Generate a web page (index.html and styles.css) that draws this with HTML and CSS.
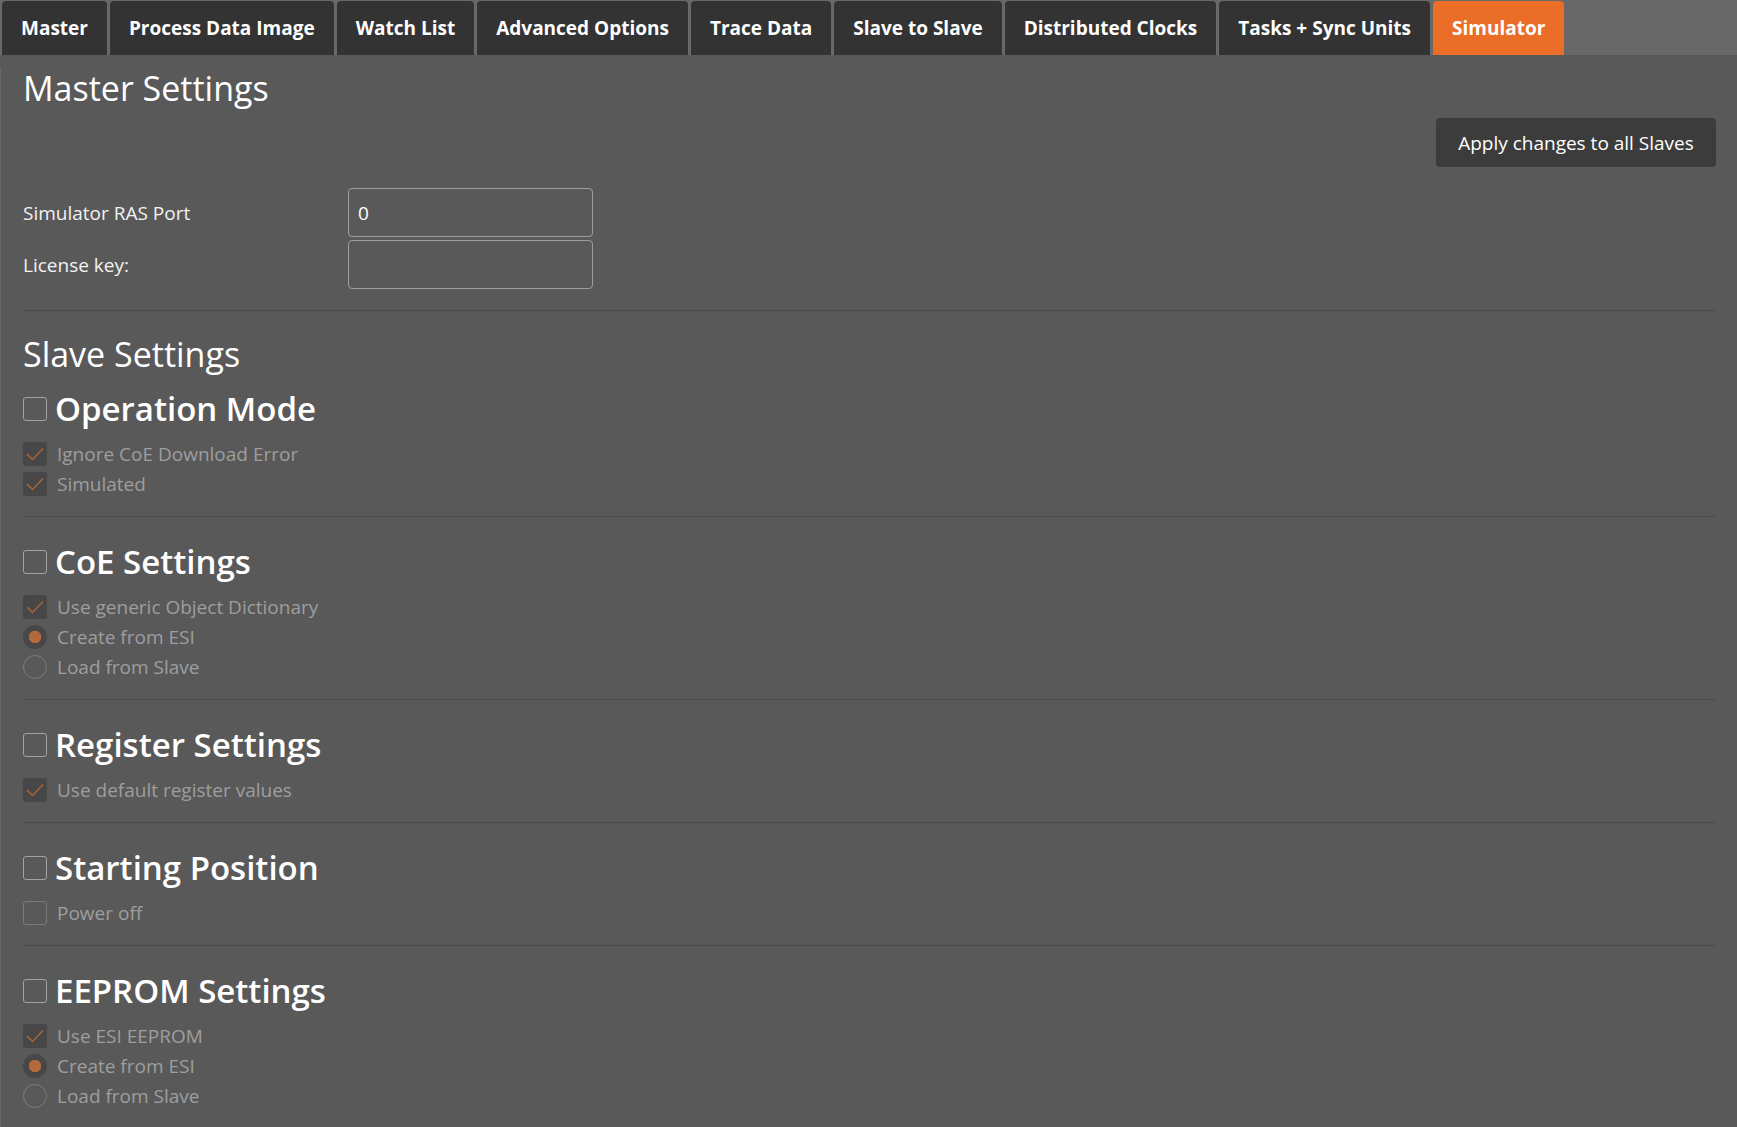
FILE: index.html
```html
<!DOCTYPE html>
<html lang="en">
<head>
    <meta charset="UTF-8">
    <meta name="viewport" content="width=device-width, initial-scale=1.0">
    <title>Simulator</title>
    <link rel="stylesheet" href="styles.css">
</head>
<body>

<!-- Tab strip -->
<nav class="tabs">
    <div class="tab">Master</div>
    <div class="tab">Process Data Image</div>
    <div class="tab">Watch List</div>
    <div class="tab">Advanced Options</div>
    <div class="tab">Trace Data</div>
    <div class="tab">Slave to Slave</div>
    <div class="tab">Distributed Clocks</div>
    <div class="tab">Tasks + Sync Units</div>
    <div class="tab active">Simulator</div>
</nav>

<main class="content">

    <section class="master">
        <h1 class="title">Master Settings</h1>
        <div class="toolbar">
            <button class="apply">Apply changes to all Slaves</button>
        </div>
        <div class="form">
            <label class="form-label">Simulator RAS Port</label>
            <input class="form-input" type="text" value="0">
            <label class="form-label">License key:</label>
            <input class="form-input" type="text">
        </div>
    </section>

    <h1 class="title slave-title">Slave Settings</h1>

    <section class="group first">
        <div class="group-head"><span class="box"></span><h2>Operation Mode</h2></div>
        <div class="items">
            <div class="item"><span class="box checked"><svg viewBox="0 0 24 24"><path d="M4 12 L9.5 17.5 L20 6.5"/></svg></span>Ignore CoE Download Error</div>
            <div class="item"><span class="box checked"><svg viewBox="0 0 24 24"><path d="M4 12 L9.5 17.5 L20 6.5"/></svg></span>Simulated</div>
        </div>
    </section>

    <section class="group">
        <div class="group-head"><span class="box"></span><h2>CoE Settings</h2></div>
        <div class="items">
            <div class="item"><span class="box checked"><svg viewBox="0 0 24 24"><path d="M4 12 L9.5 17.5 L20 6.5"/></svg></span>Use generic Object Dictionary</div>
            <div class="item"><span class="radio on"></span>Create from ESI</div>
            <div class="item"><span class="radio"></span>Load from Slave</div>
        </div>
    </section>

    <section class="group">
        <div class="group-head"><span class="box"></span><h2>Register Settings</h2></div>
        <div class="items">
            <div class="item"><span class="box checked"><svg viewBox="0 0 24 24"><path d="M4 12 L9.5 17.5 L20 6.5"/></svg></span>Use default register values</div>
        </div>
    </section>

    <section class="group">
        <div class="group-head"><span class="box"></span><h2>Starting Position</h2></div>
        <div class="items">
            <div class="item"><span class="box off"></span>Power off</div>
        </div>
    </section>

    <section class="group last">
        <div class="group-head"><span class="box"></span><h2>EEPROM Settings</h2></div>
        <div class="items">
            <div class="item"><span class="box checked"><svg viewBox="0 0 24 24"><path d="M4 12 L9.5 17.5 L20 6.5"/></svg></span>Use ESI EEPROM</div>
            <div class="item"><span class="radio on"></span>Create from ESI</div>
            <div class="item"><span class="radio"></span>Load from Slave</div>
        </div>
    </section>

</main>

</body>
</html>
```

FILE: styles.css
```css
body {
    margin: 0;
    background-color: #595959;
    font-family: "Open Sans", "Noto Sans", sans-serif;
    color: #fff;
}

/* tab strip */
.tabs {
    display: flex;
    gap: 3px;
    height: 55px;
    padding: 1px 0 0 2px;
    box-sizing: border-box;
    background-color: #686868;
}

.tab {
    display: flex;
    align-items: center;
    padding: 0 19px;
    background-color: #333;
    border-radius: 4px 4px 0 0;
    font-size: 19px;
    font-weight: 700;
    white-space: nowrap;
}

.tab.active {
    background-color: #ea6e28;
}

/* page body */
.content {
    padding: 0 21px 0 22px;
    border-left: 1px solid #666;
    min-height: 1072px;
}

.title {
    margin: 12px 0 0;
    font-size: 34px;
    line-height: 42px;
    font-weight: 500;
}

.slave-title {
    margin-top: 22px;
}

.master {
    padding-bottom: 21px;
    border-bottom: 1px solid #4b4b4b;
}

.toolbar {
    display: flex;
    justify-content: flex-end;
    margin-top: 9px;
}

.apply {
    width: 280px;
    height: 49px;
    background-color: #3c3c3c;
    color: #fff;
    border: none;
    border-radius: 4px;
    font-family: inherit;
    font-size: 19px;
    cursor: pointer;
}

.form {
    display: grid;
    grid-template-columns: 325px 245px;
    row-gap: 3px;
    align-items: center;
    margin-top: 21px;
}

.form-label {
    font-size: 19px;
    color: #f2f2f2;
}

.form-input {
    height: 49px;
    box-sizing: border-box;
    padding: 0 9px;
    background: transparent;
    border: 1px solid #9d9d9d;
    border-radius: 4px;
    color: #fff;
    font-family: inherit;
    font-size: 19px;
}

/* slave groups */
.group {
    padding: 25px 0 20px;
    border-bottom: 1px solid #4b4b4b;
}

.group.first {
    padding-top: 14px;
}

.group.last {
    border-bottom: none;
}

.group-head {
    display: flex;
    align-items: center;
    gap: 8px;
    height: 40px;
}

.group-head h2 {
    margin: 0;
    font-size: 33px;
    line-height: 40px;
    font-weight: 600;
}

.items {
    display: flex;
    flex-direction: column;
    gap: 6px;
    margin-top: 13px;
}

.item {
    display: flex;
    align-items: center;
    gap: 10px;
    height: 24px;
    font-size: 19px;
    color: #9e9e9e;
}

.box {
    flex: none;
    width: 24px;
    height: 24px;
    box-sizing: border-box;
    border: 1px solid #a3a3a3;
    border-radius: 3px;
}

.box.checked {
    border: none;
    background-color: #474747;
}

.box.off {
    border-color: #7b7b7b;
}

.box svg {
    display: block;
    width: 24px;
    height: 24px;
    fill: none;
    stroke: #a8633b;
    stroke-width: 1.5;
}

.radio {
    flex: none;
    width: 24px;
    height: 24px;
    box-sizing: border-box;
    border: 1px solid #7d7d7d;
    border-radius: 50%;
}

.radio.on {
    border: none;
    background: radial-gradient(circle, #b3683d 0, #b3683d 6px, #474747 6.5px);
}
```
